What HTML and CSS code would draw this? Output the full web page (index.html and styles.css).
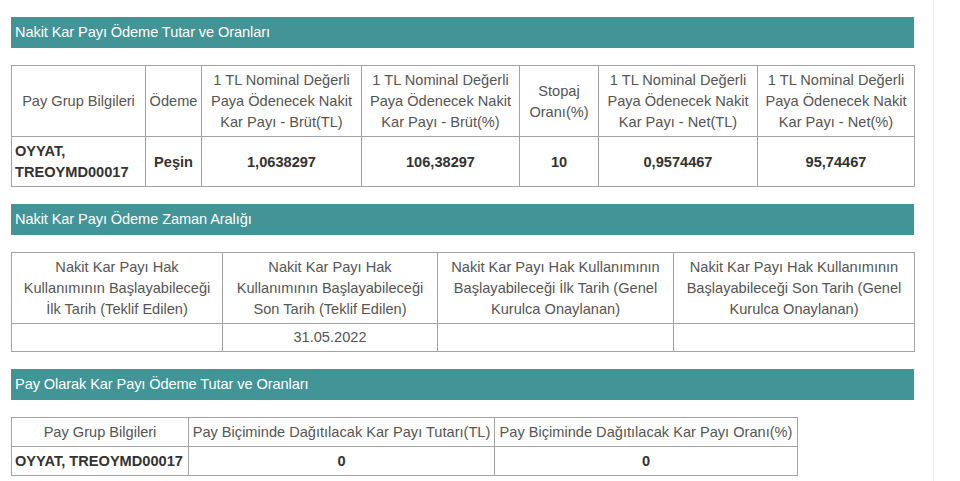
FILE: index.html
```html
<!DOCTYPE html>
<html lang="tr">
<head>
<meta charset="utf-8">
<link rel="stylesheet" href="styles.css">
</head>
<body>
<div class="page">
  <div class="content">
    <div class="bar">Nakit Kar Payı Ödeme Tutar ve Oranları</div>
    <table class="grid t1">
      <colgroup>
        <col class="c134"><col class="c56"><col class="c160"><col class="c158"><col class="c79"><col class="c159"><col class="c157">
      </colgroup>
      <tr>
        <td>Pay Grup Bilgileri</td>
        <td>Ödeme</td>
        <td>1 TL Nominal Değerli Paya Ödenecek Nakit Kar Payı - Brüt(TL)</td>
        <td>1 TL Nominal Değerli Paya Ödenecek Nakit Kar Payı - Brüt(%)</td>
        <td>Stopaj Oranı(%)</td>
        <td>1 TL Nominal Değerli Paya Ödenecek Nakit Kar Payı - Net(TL)</td>
        <td>1 TL Nominal Değerli Paya Ödenecek Nakit Kar Payı - Net(%)</td>
      </tr>
      <tr>
        <td class="b left">OYYAT, TREOYMD00017</td>
        <td class="b">Peşin</td>
        <td class="b">1,0638297</td>
        <td class="b">106,38297</td>
        <td class="b">10</td>
        <td class="b">0,9574467</td>
        <td class="b">95,74467</td>
      </tr>
    </table>

    <div class="bar">Nakit Kar Payı Ödeme Zaman Aralığı</div>
    <table class="grid t2">
      <colgroup>
        <col class="c211"><col class="c215"><col class="c236"><col class="c241">
      </colgroup>
      <tr>
        <td>Nakit Kar Payı Hak Kullanımının Başlayabileceği İlk Tarih (Teklif Edilen)</td>
        <td>Nakit Kar Payı Hak Kullanımının Başlayabileceği Son Tarih (Teklif Edilen)</td>
        <td>Nakit Kar Payı Hak Kullanımının Başlayabileceği İlk Tarih (Genel Kurulca Onaylanan)</td>
        <td>Nakit Kar Payı Hak Kullanımının Başlayabileceği Son Tarih (Genel Kurulca Onaylanan)</td>
      </tr>
      <tr class="short">
        <td></td>
        <td>31.05.2022</td>
        <td></td>
        <td></td>
      </tr>
    </table>

    <div class="bar">Pay Olarak Kar Payı Ödeme Tutar ve Oranları</div>
    <table class="grid t3">
      <colgroup>
        <col class="c177"><col class="c306"><col class="c303">
      </colgroup>
      <tr>
        <td>Pay Grup Bilgileri</td>
        <td>Pay Biçiminde Dağıtılacak Kar Payı Tutarı(TL)</td>
        <td>Pay Biçiminde Dağıtılacak Kar Payı Oranı(%)</td>
      </tr>
      <tr>
        <td class="b left nowrap">OYYAT, TREOYMD00017</td>
        <td class="b">0</td>
        <td class="b">0</td>
      </tr>
    </table>
  </div>
</div>
</body>
</html>
```

FILE: styles.css
```css
html, body {
  margin: 0;
  padding: 0;
  background: #ffffff;
}

body {
  font-family: "Liberation Sans", Arial, sans-serif;
  color: #555555;
  height: 481px;
  overflow: hidden;
}

.page {
  width: 934px;
  height: 481px;
  border-right: 1px solid #e9e9e9;
  box-sizing: border-box;
}

.content {
  display: flex;
  flex-direction: column;
  align-items: flex-start;
  gap: 17px;
  padding: 17px 0 0 11px;
}

.bar {
  width: 903px;
  height: 31px;
  box-sizing: border-box;
  background: #429496;
  color: #ffffff;
  font-size: 14.6px;
  line-height: 31px;
  padding-left: 4px;
  letter-spacing: -0.1px;
}

.grid {
  border-collapse: collapse;
  table-layout: fixed;
  font-size: 14.6px;
  line-height: 21px;
  color: #555555;
}

.t1, .t2 {
  width: 904px;
}

.t3 {
  width: 787px;
}

.grid td {
  border: 1px solid #a3a3a3;
  text-align: center;
  vertical-align: middle;
  padding: 4px 3px 3px;
}

.grid tr.short td {
  padding: 3px 3px;
}

.t3 td {
  padding: 4px 2px 3px;
}

.grid td.b {
  font-weight: bold;
  color: #333333;
}

.grid td.left {
  text-align: left;
  padding-left: 3px;
}

.nowrap {
  white-space: nowrap;
}

.c134 { width: 134px; }
.c56 { width: 56px; }
.c160 { width: 160px; }
.c158 { width: 158px; }
.c79 { width: 79px; }
.c159 { width: 159px; }
.c157 { width: 157px; }

.c211 { width: 211px; }
.c215 { width: 215px; }
.c236 { width: 236px; }
.c241 { width: 241px; }

.c177 { width: 177px; }
.c306 { width: 306px; }
.c303 { width: 303px; }
```
